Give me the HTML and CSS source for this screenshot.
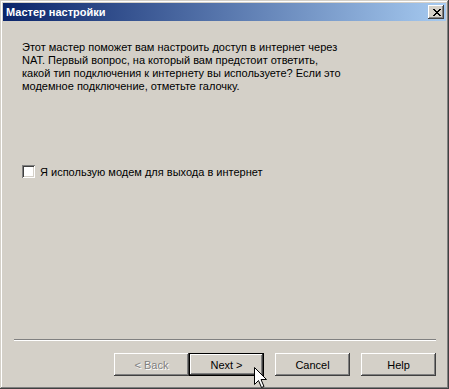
FILE: index.html
```html
<html>
<head>
  <meta charset="UTF-8">
  <title>Мастер настройки</title>
  <link rel="stylesheet" href="styles.css">
</head>
<body>
  <div class="window">
    <div class="titlebar">
      <span class="title">Мастер настройки</span>
      <button class="close-btn" type="button" aria-label="Close">
        <svg width="8" height="7" viewBox="0 0 8 7">
          <path d="M0 0h2v1h1v1h2V1h1V0h2v1H7v1H6v1H5v1h1v1h1v1h1v1H6V6H5V5H3v1H2v1H0V6h1V5h1V4h1V3H2V2H1V1H0z"/>
        </svg>
      </button>
    </div>

    <div class="content">
      <p class="intro">
        Этот мастер поможет вам настроить доступ в интернет через<br>
        NAT. Первый вопрос, на который вам предстоит ответить,<br>
        какой тип подключения к интернету вы используете? Если это<br>
        модемное подключение, отметьте галочку.
      </p>

      <label class="check-row">
        <span class="checkbox"></span>
        Я использую модем для выхода в интернет
      </label>
    </div>

    <div class="separator"></div>

    <div class="buttons">
      <div class="nav-pair">
        <button class="btn" type="button" disabled>&lt; Back</button>
        <button class="btn btn-default" type="button">Next &gt;</button>
      </div>
      <button class="btn" type="button">Cancel</button>
      <button class="btn" type="button">Help</button>
    </div>

    <!-- mouse pointer hovering over Next -->
    <svg class="cursor" width="13" height="22" viewBox="0 0 13 22">
      <path d="M0.5 0.5V17.5L4.5 13.5L7.5 20.5L10 19.5L7 12.5H12.5Z" fill="#fff" stroke="#000" stroke-width="1"/>
    </svg>
  </div>
</body>
</html>
```

FILE: styles.css
```css
:root {
  --face: #d4d0c8;
  --light: #ffffff;
  --shadow: #808080;
  --dark: #404040;
  --title-start: #0a246a;
  --title-end: #a6caf0;
}

* {
  margin: 0;
  padding: 0;
  box-sizing: border-box;
}

body {
  background: var(--face);
  font-family: 'Liberation Sans', Arial, sans-serif;
  font-size: 11px;
  color: #000;
}

.window {
  position: relative;
  width: 449px;
  height: 389px;
  padding: 3px;
  background: var(--face);
  display: flex;
  flex-direction: column;
  box-shadow:
    inset -1px -1px var(--dark),
    inset 1px 1px var(--face),
    inset -2px -2px var(--shadow),
    inset 2px 2px var(--light);
}

.titlebar {
  height: 18px;
  display: flex;
  align-items: center;
  justify-content: space-between;
  padding: 0 2px 0 3px;
  background: linear-gradient(to right, var(--title-start), var(--title-end));
}

.title {
  color: #fff;
  font-weight: bold;
  font-size: 11px;
}

.close-btn {
  width: 16px;
  height: 14px;
  border: none;
  background: var(--face);
  display: flex;
  align-items: center;
  justify-content: center;
  box-shadow:
    inset -1px -1px var(--dark),
    inset 1px 1px var(--light),
    inset -2px -2px var(--shadow);
}

.close-btn svg {
  fill: #000;
  margin-left: 1px;
}

.content {
  flex: 1;
  padding: 20px 19px 0;
}

.intro {
  line-height: 13px;
}

.check-row {
  display: flex;
  align-items: center;
  margin-top: 72px;
  gap: 5px;
}

.checkbox {
  width: 13px;
  height: 13px;
  background: #fff;
  box-shadow:
    inset 1px 1px var(--shadow),
    inset -1px -1px var(--light),
    inset 2px 2px var(--dark),
    inset -2px -2px var(--face);
}

.separator {
  margin: 0 10px 0 11px;
  height: 2px;
  border-top: 1px solid var(--shadow);
  border-bottom: 1px solid var(--light);
}

.buttons {
  display: flex;
  justify-content: flex-end;
  gap: 11px;
  padding: 12px 10px 10px;
}

.nav-pair {
  display: flex;
}

.btn {
  width: 75px;
  height: 23px;
  border: none;
  background: var(--face);
  font-family: 'Liberation Sans', Arial, sans-serif;
  font-size: 11px;
  color: #000;
  box-shadow:
    inset -1px -1px var(--dark),
    inset 1px 1px var(--light),
    inset -2px -2px var(--shadow),
    inset 2px 2px var(--face);
}

.btn:disabled {
  color: var(--shadow);
  text-shadow: 1px 1px 0 var(--light);
}

.btn-default {
  box-shadow:
    inset 0 0 0 1px #000,
    inset -2px -2px var(--dark),
    inset 2px 2px var(--light),
    inset -3px -3px var(--shadow);
}

.cursor {
  position: absolute;
  left: 254px;
  top: 367px;
}
```
